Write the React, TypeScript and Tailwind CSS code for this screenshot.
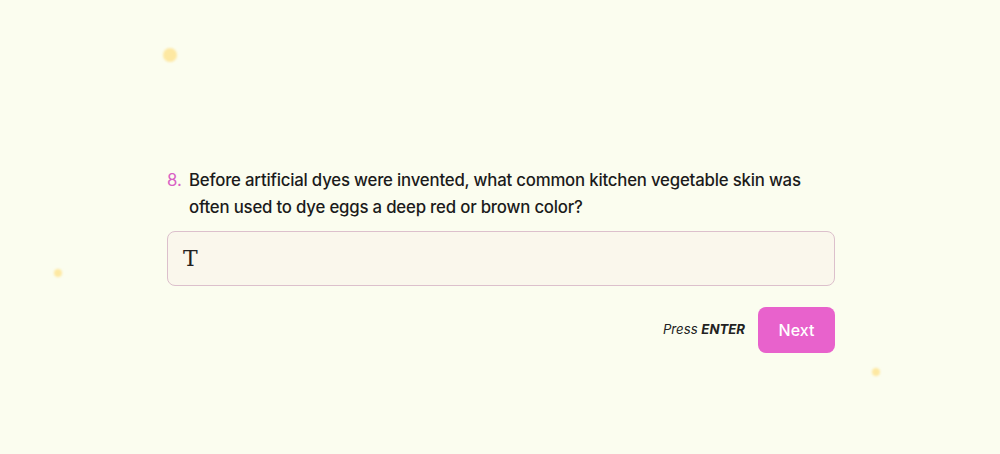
import React from "react";

const Dot = ({ className }: { className: string }) => (
  <span className={`absolute rounded-full bg-[#fde8a2] blur-[1px] ${className}`} />
);

export default function App() {
  return (
    <div
      className="relative min-h-[454px] w-full overflow-hidden bg-[#fbfdef] text-[#1b1b1b]"
      style={{ fontFamily: "Inter, 'Noto Sans', sans-serif" }}
    >
      <Dot className="left-[163px] top-[48px] h-[14px] w-[14px]" />
      <Dot className="left-[54px] top-[269px] h-[8px] w-[8px]" />
      <Dot className="left-[872px] top-[368px] h-[8px] w-[8px]" />

      <div className="mx-auto w-[668px] pt-[167px] translate-x-[1px]">
        <div className="flex text-[16.8px] leading-[27px] font-medium">
          <span className="w-[22px] shrink-0 font-normal text-[#d860c4]">8.</span>
          <p className="pr-6 tracking-[-0.2px]">
            Before artificial dyes were invented, what common kitchen vegetable skin was often used
            to dye eggs a deep red or brown color?
          </p>
        </div>

        <div className="mt-[10px] flex h-[55px] items-center rounded-lg border border-[#dcc0cc] bg-[#faf7ec] px-[15px]">
          <span
            className="text-[22px] text-[#222]"
            style={{ fontFamily: "'DejaVu Serif', serif" }}
          >
            T
          </span>
        </div>

        <div className="mt-[21px] flex items-center justify-end gap-[13px]">
          <span className="text-[13.2px] italic text-[#222]">
            Press <span className="font-bold">ENTER</span>
          </span>
          <button className="h-[46px] w-[77px] rounded-lg bg-[#e862cc] text-[16px] font-medium text-white">
            Next
          </button>
        </div>
      </div>
    </div>
  );
}
